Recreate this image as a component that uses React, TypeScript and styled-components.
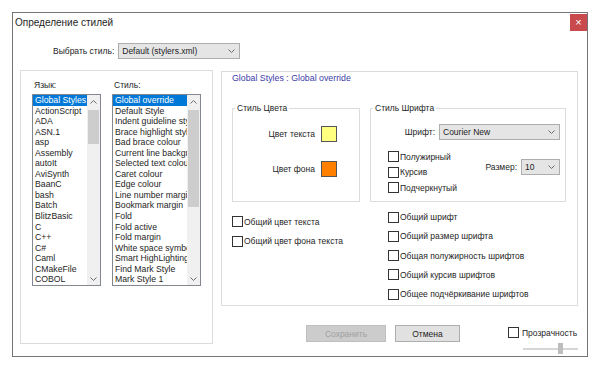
import React, { FC } from 'react';
import styled, { createGlobalStyle } from 'styled-components';

const languages = [
    'Global Styles', 'ActionScript', 'ADA', 'ASN.1', 'asp', 'Assembly', 'autoIt', 'AviSynth', 'BaanC',
    'bash', 'Batch', 'BlitzBasic', 'C', 'C++', 'C#', 'Caml', 'CMakeFile', 'COBOL',
];

const styleNames = [
    'Global override', 'Default Style', 'Indent guideline style', 'Brace highlight style', 'Bad brace colour',
    'Current line background colour', 'Selected text colour', 'Caret colour', 'Edge colour',
    'Line number margin', 'Bookmark margin', 'Fold', 'Fold active', 'Fold margin', 'White space symbol',
    'Smart HighLighting', 'Find Mark Style', 'Mark Style 1',
];

const Chevron: FC<{ up?: boolean }> = ({ up }) => (
    <svg width="7" height="4" viewBox="0 0 7 4">
        <polyline
            points={up ? '0.5,3.5 3.5,0.5 6.5,3.5' : '0.5,0.5 3.5,3.5 6.5,0.5'}
            fill="none"
            stroke="#6d6d6d"
            strokeWidth="1"
        />
    </svg>
);

const Select: FC<{ width: number; value: string }> = ({ width, value }) => (
    <Dropdown $w={width}>
        <span>{value}</span>
        <Chevron />
    </Dropdown>
);

const ListBox: FC<{ items: string[]; width: number; thumbHeight: number }> = ({ items, width, thumbHeight }) => (
    <List $w={width}>
        <Rows>
            {items.map((item, i) => (
                <Row key={item}>
                    <RowText $selected={i === 0}>{item}</RowText>
                </Row>
            ))}
        </Rows>
        <ScrollBar>
            <ScrollArrow>
                <Chevron up />
            </ScrollArrow>
            <Track>
                <Thumb $h={thumbHeight} />
            </Track>
            <ScrollArrow>
                <Chevron />
            </ScrollArrow>
        </ScrollBar>
    </List>
);

const CheckBox: FC<{ label: string; h: number }> = ({ label, h }) => (
    <Check $h={h}>
        <Box />
        <span>{label}</span>
    </Check>
);

const App: FC = () => {
    return (
        <Page>
            <GlobalStyle />
            <Window>
                <TitleBar>
                    <Title>Определение стилей</Title>
                    <Close>×</Close>
                </TitleBar>
                <ChooseRow>
                    <Label>Выбрать стиль:</Label>
                    <Select width={122} value="Default (stylers.xml)" />
                </ChooseRow>
                <Body>
                    <LeftGroup>
                        <ListColumn>
                            <ListLabel>Язык:</ListLabel>
                            <ListBox items={languages} width={69} thumbHeight={34} />
                        </ListColumn>
                        <ListColumn>
                            <ListLabel>Стиль:</ListLabel>
                            <ListBox items={styleNames} width={89} thumbHeight={97} />
                        </ListColumn>
                    </LeftGroup>
                    <RightColumn>
                        <StylePanel>
                            <PanelTitle>Global Styles : Global override</PanelTitle>
                            <Groups>
                                <Group $w={128}>
                                    <Legend>Стиль Цвета</Legend>
                                    <ColorRows>
                                        <ColorRow>
                                            <span>Цвет текста</span>
                                            <Swatch $color="#ffff80" />
                                        </ColorRow>
                                        <ColorRow>
                                            <span>Цвет фона</span>
                                            <Swatch $color="#ff8000" />
                                        </ColorRow>
                                    </ColorRows>
                                </Group>
                                <Group $w={196}>
                                    <Legend>Стиль Шрифта</Legend>
                                    <FontContent>
                                        <FontRow>
                                            <Label>Шрифт:</Label>
                                            <Select width={121} value="Courier New" />
                                        </FontRow>
                                        <FontLower>
                                            <Checks>
                                                <CheckBox label="Полужирный" h={15.5} />
                                                <CheckBox label="Курсив" h={15.5} />
                                                <CheckBox label="Подчеркнутый" h={15.5} />
                                            </Checks>
                                            <SizeRow>
                                                <Label>Размер:</Label>
                                                <Select width={39} value="10" />
                                            </SizeRow>
                                        </FontLower>
                                    </FontContent>
                                </Group>
                            </Groups>
                            <Options>
                                <OptionCol $pad={0} $top={10}>
                                    <CheckBox label="Общий цвет текста" h={19.5} />
                                    <CheckBox label="Общий цвет фона текста" h={19.5} />
                                </OptionCol>
                                <OptionCol $pad={18} $top={5.5}>
                                    <CheckBox label="Общий шрифт" h={19.25} />
                                    <CheckBox label="Общий размер шрифта" h={19.25} />
                                    <CheckBox label="Общая полужирность шрифтов" h={19.25} />
                                    <CheckBox label="Общий курсив шрифтов" h={19.25} />
                                    <CheckBox label="Общее подчёркивание шрифтов" h={19.25} />
                                </OptionCol>
                            </Options>
                        </StylePanel>
                        <Footer>
                            <Button $w={80} disabled>
                                Сохранить
                            </Button>
                            <Button $w={65}>Отмена</Button>
                            <Transparency>
                                <CheckBox label="Прозрачность" h={11} />
                                <Slider>
                                    <SliderTrack $w={35} />
                                    <SliderThumb />
                                    <SliderTrack $w={15} />
                                </Slider>
                            </Transparency>
                        </Footer>
                    </RightColumn>
                </Body>
            </Window>
        </Page>
    );
};

export default App;

const GlobalStyle = createGlobalStyle`
    body {
        margin: 0;
        background: #ffffff;
        font-family: 'Liberation Sans', Arial, sans-serif;
        color: #1e1e1e;
    }
`;

const Page = styled.div`
    padding: 12px;
`;

const Window = styled.div`
    width: 576px;
    height: 345px;
    box-sizing: border-box;
    border: 1px solid #747474;
    background: #ffffff;
    display: flex;
    flex-direction: column;
`;

const TitleBar = styled.div`
    height: 20px;
    display: flex;
    justify-content: space-between;
    align-items: center;
    padding-left: 2px;
`;

const Title = styled.div`
    font-size: 10px;
    line-height: 12px;
`;

const Close = styled.div`
    align-self: flex-start;
    margin-top: 1px;
    width: 17px;
    height: 17px;
    background: #c94a4c;
    color: #ffffff;
    font-size: 11px;
    line-height: 16px;
    text-align: center;
`;

const ChooseRow = styled.div`
    margin-top: 10px;
    padding-left: 40px;
    display: flex;
    align-items: center;
    gap: 4px;
`;

const Label = styled.span`
    font-size: 8.5px;
    white-space: nowrap;
`;

const Dropdown = styled.div<{ $w: number }>`
    width: ${(p) => p.$w}px;
    height: 16px;
    box-sizing: border-box;
    border: 1px solid #adadad;
    background: #e5e5e5;
    display: flex;
    align-items: center;
    justify-content: space-between;
    padding: 0 4px 0 3px;
    font-size: 8.5px;
    white-space: nowrap;
`;

const Body = styled.div`
    margin-top: 11px;
    padding-left: 7px;
    display: grid;
    grid-template-columns: 193px 357px;
    column-gap: 8px;
    align-items: start;
`;

const LeftGroup = styled.div`
    height: 274px;
    box-sizing: border-box;
    border: 1px solid #dcdcdc;
    padding: 9px 0 0 11px;
    display: flex;
    gap: 11px;
`;

const ListColumn = styled.div`
    display: flex;
    flex-direction: column;
    gap: 4px;
`;

const ListLabel = styled.span`
    font-size: 8.5px;
    line-height: 10px;
    padding-left: 2px;
`;

const List = styled.div<{ $w: number }>`
    width: ${(p) => p.$w}px;
    height: 192px;
    box-sizing: border-box;
    border: 1px solid #828790;
    display: flex;
`;

const Rows = styled.div`
    flex: 1;
    min-width: 0;
    overflow: hidden;
`;

const Row = styled.div`
    height: 10.55px;
    font-size: 8.7px;
    line-height: 10.55px;
    white-space: nowrap;
`;

const RowText = styled.span<{ $selected: boolean }>`
    display: block;
    padding-left: 2px;
    background: ${(p) => (p.$selected ? '#0078d7' : 'transparent')};
    color: ${(p) => (p.$selected ? '#ffffff' : 'inherit')};
`;

const ScrollBar = styled.div`
    width: 13px;
    flex-shrink: 0;
    background: #f0f0f0;
    display: flex;
    flex-direction: column;
`;

const ScrollArrow = styled.div`
    height: 13px;
    display: flex;
    align-items: center;
    justify-content: center;
`;

const Track = styled.div`
    flex: 1;
    padding-top: 2px;
`;

const Thumb = styled.div<{ $h: number }>`
    height: ${(p) => p.$h}px;
    margin: 0 1px;
    background: #cdcdcd;
`;

const RightColumn = styled.div`
    padding-top: 1px;
    display: flex;
    flex-direction: column;
`;

const StylePanel = styled.div`
    height: 235px;
    box-sizing: border-box;
    border: 1px solid #dcdcdc;
    padding: 1px 11px 0 10px;
    display: flex;
    flex-direction: column;
`;

const PanelTitle = styled.div`
    font-size: 8.8px;
    line-height: 10px;
    color: #3c3caa;
`;

const Groups = styled.div`
    margin-top: 20px;
    display: flex;
    gap: 10px;
`;

const Group = styled.fieldset<{ $w: number }>`
    width: ${(p) => p.$w}px;
    height: 99px;
    box-sizing: border-box;
    margin: 0;
    padding: 0;
    border: 1px solid #dcdcdc;
    min-width: 0;
`;

const Legend = styled.legend`
    margin-left: 2px;
    padding: 0 2px;
    font-size: 8.5px;
    line-height: 10px;
`;

const ColorRows = styled.div`
    margin-top: 13px;
    padding-right: 22px;
    display: flex;
    flex-direction: column;
    align-items: flex-end;
    gap: 19px;
`;

const ColorRow = styled.div`
    display: flex;
    align-items: center;
    gap: 6px;
    font-size: 8.5px;
`;

const Swatch = styled.div<{ $color: string }>`
    width: 16px;
    height: 16px;
    box-sizing: border-box;
    border: 1px solid #555555;
    background: ${(p) => p.$color};
`;

const FontContent = styled.div`
    margin-top: 11px;
    padding: 0 5px 0 17px;
    display: flex;
    flex-direction: column;
`;

const FontRow = styled.div`
    display: flex;
    justify-content: flex-end;
    align-items: center;
    gap: 4px;
`;

const FontLower = styled.div`
    margin-top: 9px;
    display: flex;
    justify-content: space-between;
    align-items: flex-start;
`;

const Checks = styled.div`
    display: flex;
    flex-direction: column;
`;

const SizeRow = styled.div`
    margin-top: 10px;
    display: flex;
    align-items: center;
    gap: 4px;
`;

const Check = styled.div<{ $h: number }>`
    height: ${(p) => p.$h}px;
    display: flex;
    align-items: center;
    gap: 1px;
    font-size: 8.5px;
    white-space: nowrap;
`;

const Box = styled.span`
    width: 11px;
    height: 11px;
    box-sizing: border-box;
    border: 1px solid #333333;
    background: #ffffff;
    flex-shrink: 0;
`;

const Options = styled.div`
    display: grid;
    grid-template-columns: 128px 1fr;
    column-gap: 10px;
`;

const OptionCol = styled.div<{ $pad: number; $top: number }>`
    padding-left: ${(p) => p.$pad}px;
    padding-top: ${(p) => p.$top}px;
    display: flex;
    flex-direction: column;
`;

const Footer = styled.div`
    margin-top: 19px;
    padding-left: 85px;
    display: flex;
    align-items: flex-start;
    gap: 9px;
`;

const Button = styled.button<{ $w: number }>`
    width: ${(p) => p.$w}px;
    height: 17px;
    box-sizing: border-box;
    margin: 0;
    padding: 0;
    border: 1px solid #adadad;
    background: #e1e1e1;
    font-family: 'Liberation Sans', Arial, sans-serif;
    font-size: 8.5px;
    color: #1e1e1e;

    &:disabled {
        border-color: #bfbfbf;
        background: #cccccc;
        color: #a0a0a0;
    }
`;

const Transparency = styled.div`
    margin-left: 39px;
    padding-top: 2px;
    display: flex;
    flex-direction: column;
    gap: 5px;

    > div:first-child {
        gap: 3px;
    }
`;

const Slider = styled.div`
    margin-left: 15px;
    height: 11px;
    display: flex;
    align-items: center;
`;

const SliderTrack = styled.div<{ $w: number }>`
    width: ${(p) => p.$w}px;
    height: 2px;
    background: #d6d6d6;
`;

const SliderThumb = styled.div`
    width: 5px;
    height: 11px;
    background: #bdbdbd;
`;
